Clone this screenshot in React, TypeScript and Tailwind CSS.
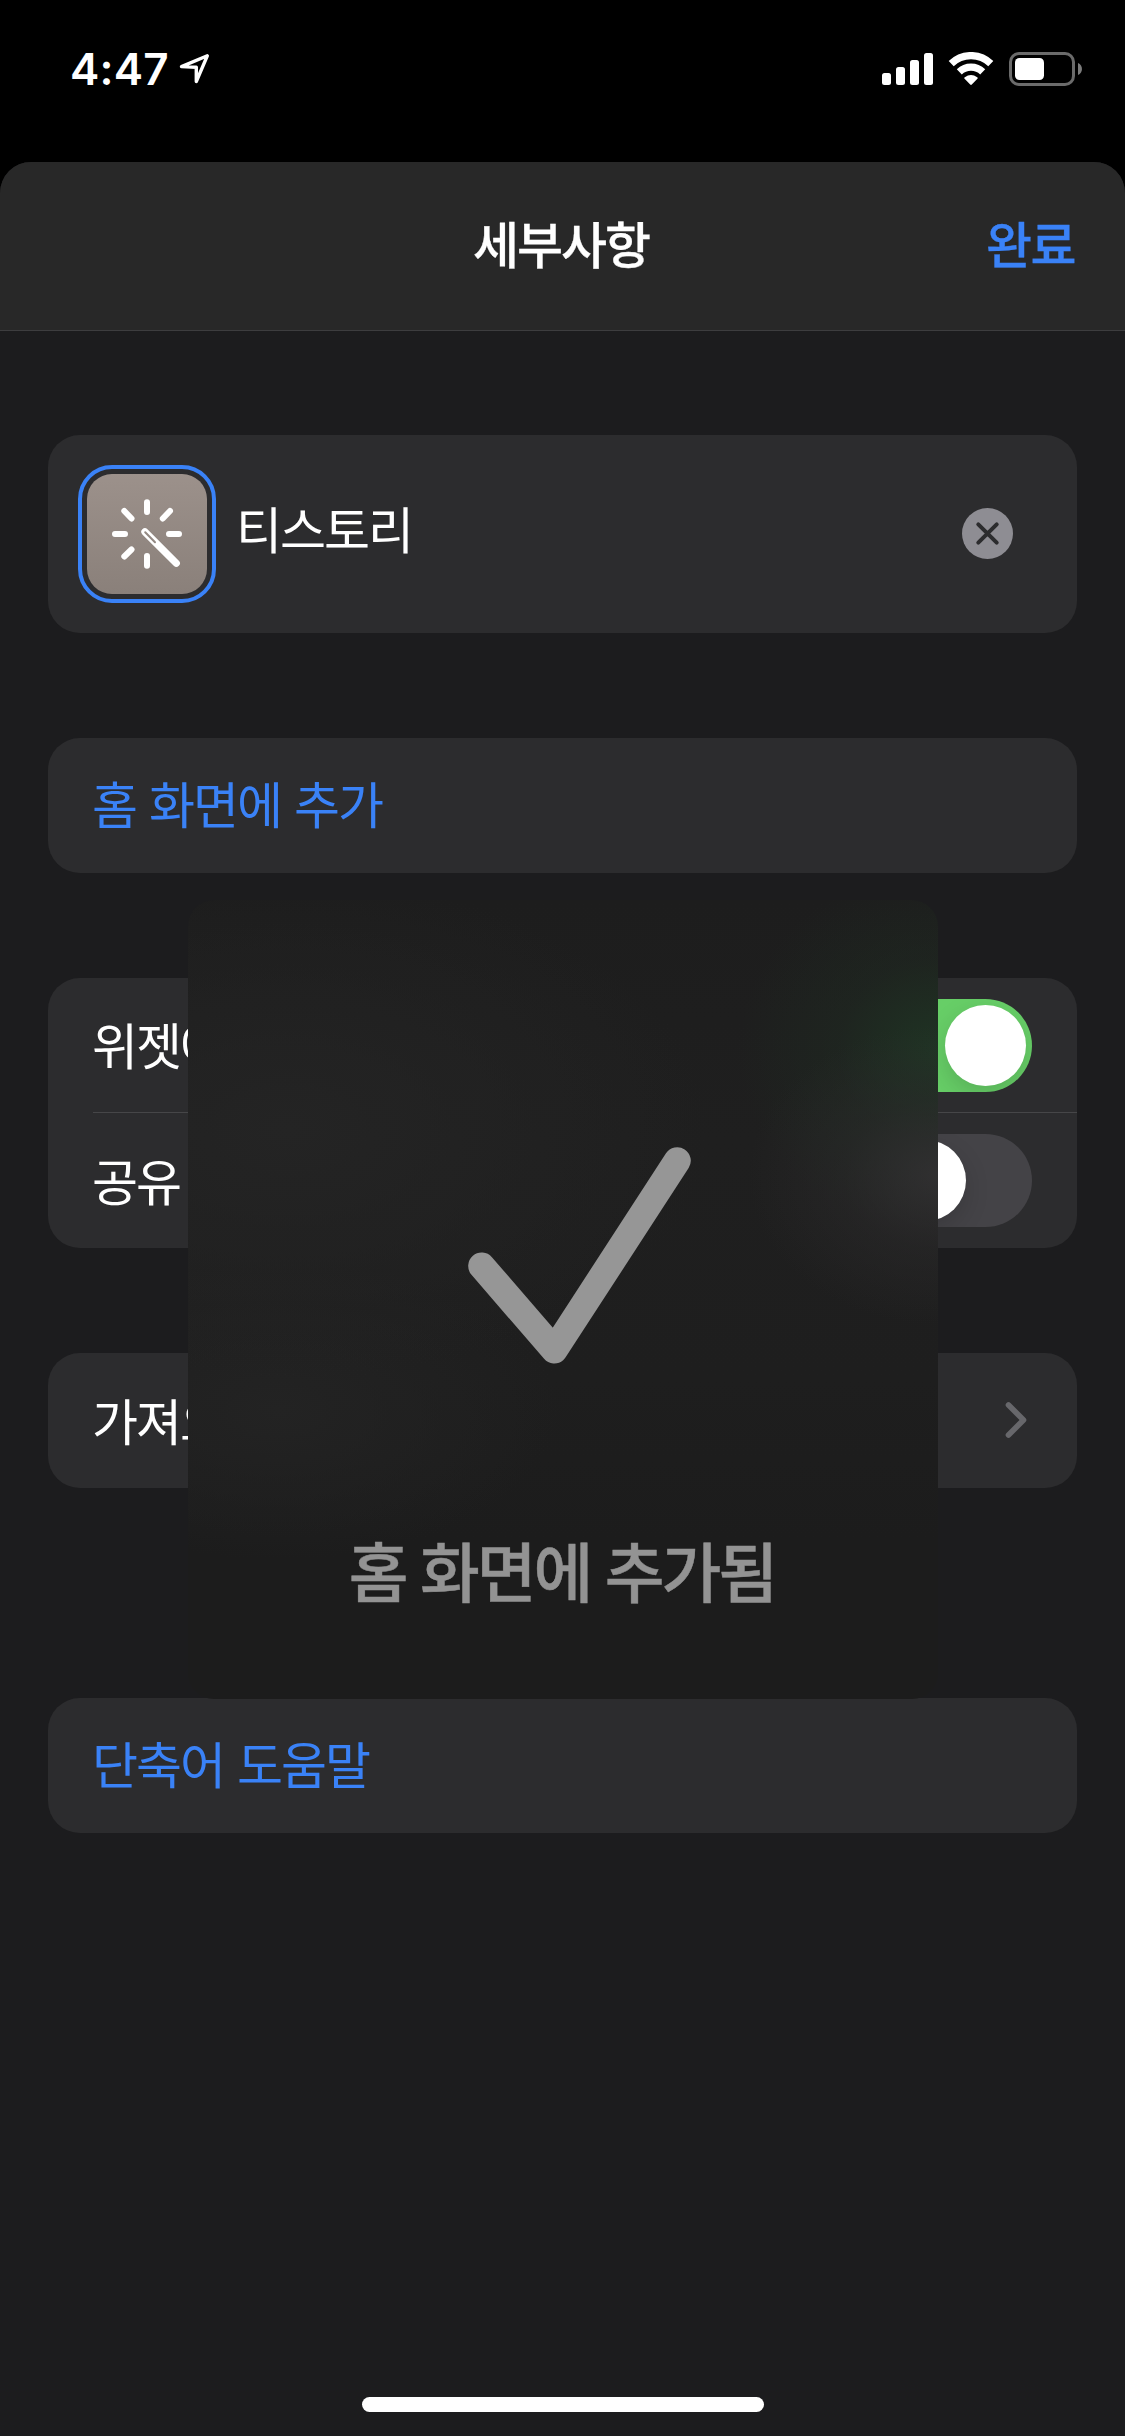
import type { ReactNode } from "react";

function StatusBar() {
  return (
    <div className="flex h-[162px] items-start justify-between pl-[70px] pr-[43px] pt-[52px] text-white">
      <div className="flex items-start">
        <span className="font-['Inter'] text-[44px] font-semibold leading-[34px] tracking-[0.2px]">4:47</span>
        <svg width="32" height="34" viewBox="178 52 32 34" className="ml-[9px]" fill="none">
          <path d="M207.3 55.8 181.5 66.6 196.3 67.2 196.3 81.5Z" stroke="currentColor" strokeWidth="3.4" strokeLinejoin="round" />
        </svg>
      </div>

      <svg width="200" height="36" viewBox="882 52 200 36" fill="none">
        {/* Signal */}
        <rect x="882" y="73" width="9" height="12" rx="2.5" fill="#fff" />
        <rect x="896" y="67" width="9" height="18" rx="2.5" fill="#fff" />
        <rect x="910" y="60" width="9" height="25" rx="2.5" fill="#fff" />
        <rect x="924" y="53" width="9" height="32" rx="2.5" fill="#fff" />
        {/* Wifi */}
        <path d="M951.2 63.6a28.4 28.4 0 0 1 39.6 0" stroke="#fff" strokeWidth="7.2" />
        <path d="M959.3 71.8a16.8 16.8 0 0 1 23.4 0" stroke="#fff" strokeWidth="7.2" />
        <path d="M964.6 78.8c-.5-.5-.4-1.2.2-1.6a11 11 0 0 1 12.4 0c.6.4.7 1.1.2 1.6l-5.6 5.7c-.5.5-1.1.5-1.6 0z" fill="#fff" />
        {/* Battery */}
        <rect x="1010.5" y="53.5" width="63" height="31" rx="8.5" stroke="#6b6b6b" strokeWidth="3" />
        <rect x="1015" y="58" width="29" height="22" rx="4.5" fill="#fff" />
        <path d="M1078 63c5.3 2 5.3 10 0 12z" fill="#7c7c7c" />
      </svg>
    </div>
  );
}

function Card({ className = "", children }: { className?: string; children: ReactNode }) {
  return <div className={`rounded-[32px] bg-[#2c2c2e] ${className}`}>{children}</div>;
}

function Toggle({ on }: { on?: boolean }) {
  return (
    <div className={`flex h-[93px] w-[153px] items-center overflow-hidden rounded-full px-1.5 ${on ? "justify-end bg-[#67ce67]" : "bg-[#444347]"}`}>
      <div className="h-[81px] w-[81px] rounded-full bg-white shadow-[0_9px_24px_rgba(0,0,0,0.15)]" />
    </div>
  );
}

function ShortcutIcon() {
  return (
    <div className="flex h-[138px] w-[138px] items-center justify-center rounded-[34px] border-4 border-[#3a82f7]">
      <div className="h-[120px] w-[120px] rounded-[25px] bg-gradient-to-b from-[#9c918b] to-[#8a807a]">
        <svg width="120" height="120" viewBox="87 474 120 120" fill="none" stroke="#fff" strokeWidth="6" strokeLinecap="round">
          <path d="M147 502.3v9.7M147 556v9.7M115 534h10M169 534h10" />
          <path d="M124.3 511 131.5 518.5M170 511 162.8 518.5M131.5 549.5 124.3 556.5" />
          <path d="M144.9 531.9 176.3 563.2" strokeWidth="7.2" />
          <path d="M145.2 532.3 155 542.2" stroke="#938983" strokeWidth="2" />
        </svg>
      </div>
    </div>
  );
}

// "Added" toast that floats over the list
function AddedHud() {
  return (
    <div className="absolute left-[188px] top-[900px] flex h-[799px] w-[750px] flex-col items-center overflow-hidden rounded-[26px] bg-[#1d1d1d] bg-[radial-gradient(190px_150px_at_100%_275px,rgba(54,52,54,0.75),rgba(48,47,48,0.35)_50%,transparent),radial-gradient(200px_180px_at_100%_150px,rgba(31,54,36,0.9),rgba(31,46,34,0.4)_50%,transparent),radial-gradient(420px_250px_at_100px_230px,#242424,transparent),radial-gradient(280px_150px_at_90px_510px,#232323,transparent),linear-gradient(#1d1d1d,#1f1f1f_30%,#1e1e1e_60%,#1c1c1c_80%)]">
      <svg width="226" height="220" viewBox="466 1145 226 220" className="ml-8 mt-[245px]" fill="none">
        <path d="M481.7 1266 554.3 1350 677.3 1160.7" stroke="#969696" strokeWidth="27" strokeLinecap="round" strokeLinejoin="round" />
      </svg>
      <p className="mr-0.5 mt-[159px] whitespace-nowrap text-[65px] font-medium leading-[100px] tracking-[-3px] text-[#939393] [-webkit-text-stroke:0.5px]">홈 화면에 추가됨</p>
    </div>
  );
}

export default function App() {
  return (
    <div className="relative flex h-[2436px] w-[1125px] flex-col overflow-hidden bg-black font-['Inter','Noto_Sans_CJK_KR',sans-serif] text-[50px] tracking-[-2px] text-white">
      <StatusBar />

      <div className="flex flex-1 flex-col overflow-hidden rounded-t-[31px] bg-[#1c1c1e]">
        {/* Header */}
        <header className="grid h-[169px] grid-cols-3 items-center border-b border-[#3d3d3f] bg-[#282828] pl-[47px] pr-[50px] font-medium [-webkit-text-stroke:0.3px]">
          <h1 className="col-start-2 text-center">세부사항</h1>
          <button className="justify-self-end font-medium tracking-[-1.5px] text-[#3a82f7]">완료</button>
        </header>

        <main className="flex flex-col px-12 pt-[104px]">
          {/* Name */}
          <Card className="flex h-[198px] items-center pl-[30px] pr-16">
            <ShortcutIcon />
            <span className="ml-5 flex-1 pb-[5px]">티스토리</span>
            <svg width="51" height="51" viewBox="0 0 51 51" className="mb-px">
              <circle cx="25.5" cy="25.5" r="25.5" fill="#8e8d93" />
              <path d="M16.3 16.3l18.4 18.4M34.7 16.3 16.3 34.7" stroke="#2c2c2e" strokeWidth="4" strokeLinecap="round" />
            </svg>
          </Card>

          <Card className="mt-[105px] flex h-[135px] items-center pl-11 pt-px text-[#3a82f7] [word-spacing:1px]">홈 화면에 추가</Card>

          <Card className="mt-[105px] h-[270px] pl-[45px]">
            <div className="flex h-[135px] items-center justify-between border-b border-[#464648] pr-[45px]">
              <span className="-ml-px pt-[5px]">위젯에서 보기</span>
              <Toggle on />
            </div>
            <div className="flex h-[135px] items-center justify-between pr-[45px]">
              <span className="-ml-px pt-[5px]">공유 시트에서 보기</span>
              <Toggle />
            </div>
          </Card>

          <Card className="mt-[105px] flex h-[135px] items-center justify-between pl-11 pr-[50px]">
            <span className="pt-[5px]">가져오기 질문</span>
            <svg width="22" height="38" viewBox="0 0 22 38" fill="none" className="mb-0.5">
              <path d="M3.5 4l15 15-15 15" stroke="#67676b" strokeWidth="5.6" strokeLinecap="round" strokeLinejoin="round" />
            </svg>
          </Card>

          <Card className="mt-[210px] flex h-[135px] items-center pl-11 pt-px text-[#3a82f7] [word-spacing:1px]">단축어 도움말</Card>
        </main>

        {/* Home indicator */}
        <div className="mx-auto mb-6 mt-auto h-[15px] w-[402px] rounded-full bg-white" />
      </div>

      <AddedHud />
    </div>
  );
}
